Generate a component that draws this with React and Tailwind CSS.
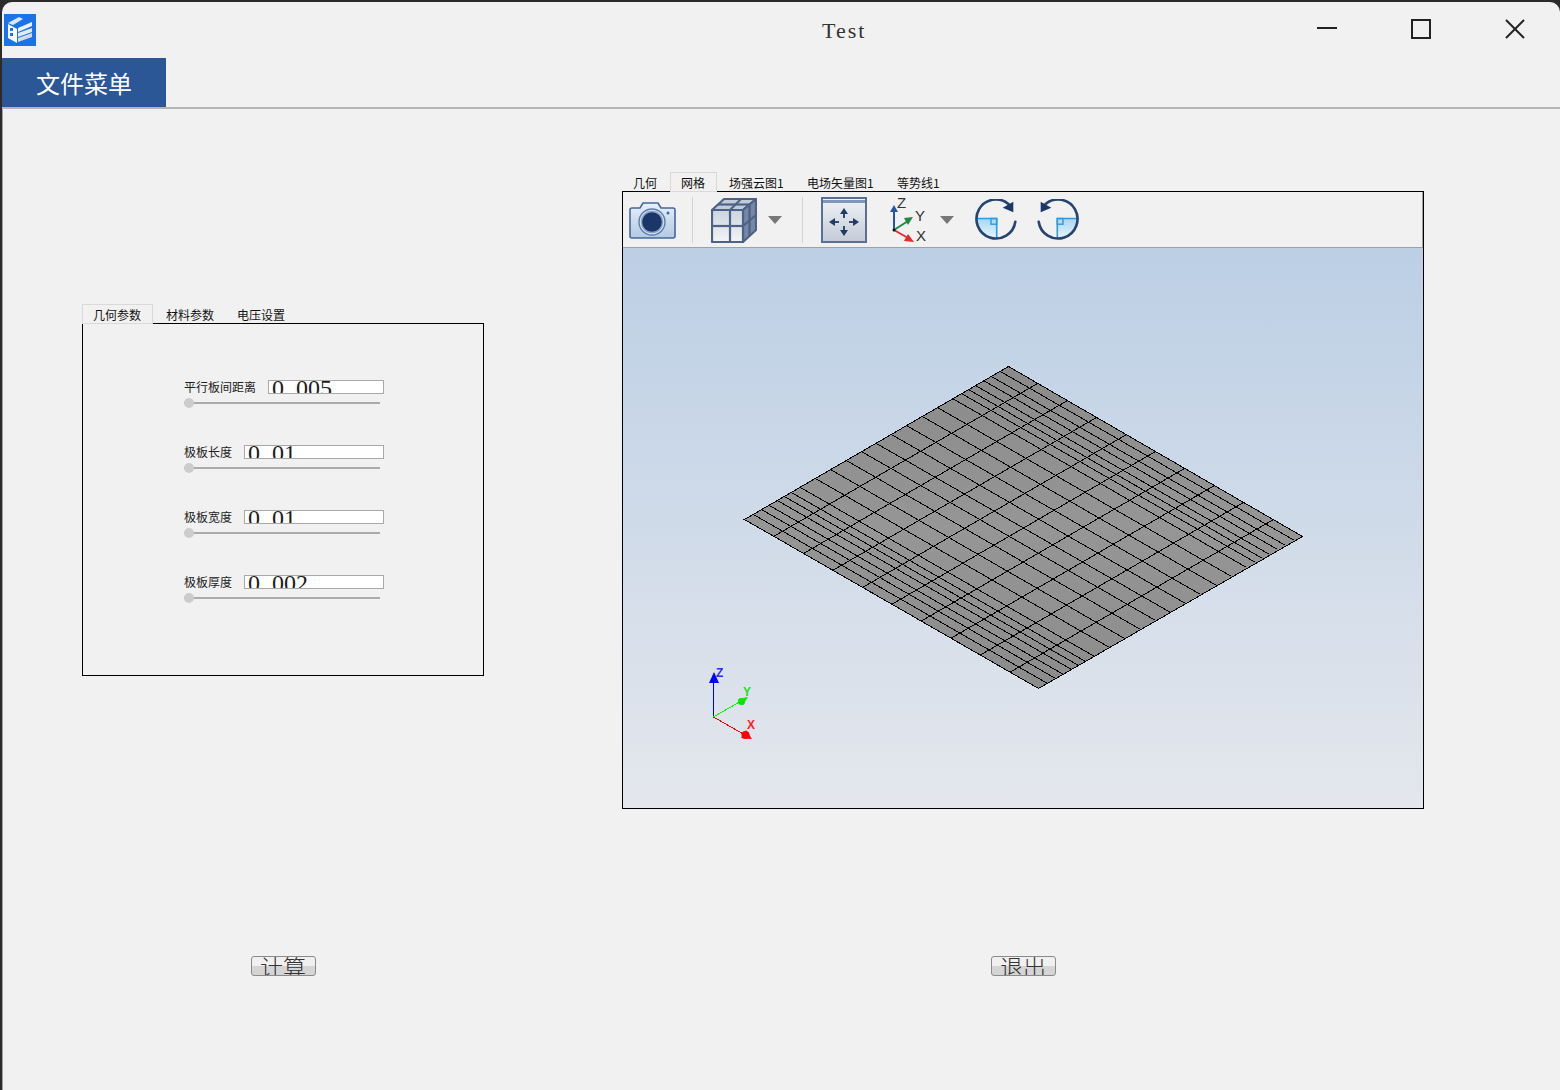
const cjk = { fontFamily: '"Noto Sans CJK SC", sans-serif' };

const leftTabs = [
  { label: "几何参数", active: true },
  { label: "材料参数" },
  { label: "电压设置" },
];

const viewTabs = [
  { label: "几何", width: "w-[48px] pl-[11px]" },
  { label: "网格", width: "w-[47px] pl-[10px]", active: true },
  { label: "场强云图1", width: "w-[78px] pl-[12px]" },
  { label: "电场矢量图1", width: "w-[90px] pl-[12px]" },
  { label: "等势线1", width: "w-[70px] pl-[12px]" },
];

const params = [
  { label: "平行板间距离", value: "0.005" },
  { label: "极板长度", value: "0.01" },
  { label: "极板宽度", value: "0.01" },
  { label: "极板厚度", value: "0.002" },
];

// mesh corners, in page pixels
const T = [1008.5, 366.5];
const L = [744.5, 519.5];
const B = [1038.5, 688.5];
const R = [1302.5, 536.5];
const outline = [T, R, B, L].map((p) => p.join(",")).join(" ");

const lerp = (a, b, f) => [Math.round(a[0] + (b[0] - a[0]) * f - 0.5) + 0.5, Math.round(a[1] + (b[1] - a[1]) * f - 0.5) + 0.5];

// spacing along the short edges: tight at both ends, even in the middle
const dense = [8.5, 17, 25, 33, 40, 47, 56];
const edgeOffsets = [
  ...dense,
  ...Array.from({ length: 9 }, (_, i) => 56 + (i + 1) * 15.2),
  ...dense.slice().reverse().map((d) => 264 - d),
];

function Mesh() {
  const lines = [];
  // every line of a family gets the same vector, so their pixel steps line up
  edgeOffsets.forEach((o) => {
    const s = lerp(L, T, o / 264);
    lines.push([s, [s[0] + 294, s[1] + 169]]);
  });
  for (let i = 1; i < 10; i++) {
    const s = lerp(T, R, i / 10);
    lines.push([s, [s[0] - 264, s[1] + 153]]);
  }
  return (
    <g shapeRendering="crispEdges">
      <clipPath id="meshClip">
        <polygon points={outline} />
      </clipPath>
      <polygon points={outline} fill="url(#meshFill)" />
      <g clipPath="url(#meshClip)">
        {lines.map((l, i) => (
          <line key={i} x1={l[0][0]} y1={l[0][1]} x2={l[1][0]} y2={l[1][1]} stroke="#000" strokeWidth="1" />
        ))}
      </g>
      <polygon points={outline} fill="none" stroke="#000" />
    </g>
  );
}

function Triad() {
  return (
    <g fontFamily="Liberation Sans, sans-serif" fontWeight="700" fontSize="12">
      <g shapeRendering="crispEdges">
        <line x1="713.5" y1="717" x2="713.5" y2="682" stroke="#0000ff" />
        <line x1="713.5" y1="717" x2="741" y2="701" stroke="#00ff00" />
        <line x1="713.5" y1="717" x2="745" y2="735" stroke="#ff0000" />
      </g>
      <polygon points="714,672 709,683 719,683" fill="#0000ff" />
      <polygon points="748,697 738,699 743,705" fill="#00e800" />
      <circle cx="741.5" cy="701.5" r="3.5" fill="#00e800" />
      <polygon points="752,739 741,738 746,730" fill="#ff0000" />
      <circle cx="745.5" cy="735" r="4" fill="#ff0000" />
      <text x="716" y="677" fill="#2a2aff">Z</text>
      <text x="743" y="696" fill="#22e022">Y</text>
      <text x="747" y="729" fill="#ff2020">X</text>
    </g>
  );
}

function AppIcon() {
  return (
    <svg width="32" height="32" viewBox="0 0 32 32">
      <rect width="32" height="32" fill="#1a73e8" />
      <polygon points="4,9 15,3 19,5 9,11" fill="#dfe6ef" />
      <polygon points="4,10 13,15 13,29 4,24" fill="#fff" />
      <rect x="6" y="14" width="3" height="3" fill="#1a73e8" />
      <rect x="6" y="19" width="3" height="3" fill="#1a73e8" />
      <polygon points="14,14 28,8 28,12 14,18" fill="#eef3f9" />
      <polygon points="14,19 28,14 28,18 14,23" fill="#e3e9f1" />
      <polygon points="14,24 28,19 28,23 14,28" fill="#d3dbe6" />
    </svg>
  );
}

function CameraIcon() {
  return (
    <svg width="47" height="38" viewBox="0 0 47 38" className="ml-[6px]">
      <defs>
        <linearGradient id="camBody" x1="0" y1="0" x2="0" y2="1">
          <stop offset="0" stopColor="#e6f0fa" />
          <stop offset="1" stopColor="#b4c9e2" />
        </linearGradient>
      </defs>
      <path
        d="M3 7h8l3-5h15l3 5h12a2 2 0 0 1 2 2v26a2 2 0 0 1-2 2H3a2 2 0 0 1-2-2V9a2 2 0 0 1 2-2z"
        fill="url(#camBody)"
        stroke="#46689a"
        strokeWidth="1.6"
      />
      <circle cx="23" cy="21" r="13" fill="#d7e4f2" stroke="#5d7fae" strokeWidth="1.4" />
      <circle cx="23" cy="21" r="10.5" fill="#1b3668" stroke="#8aa3c5" strokeWidth="1.4" />
      <circle cx="23" cy="21" r="8" fill="#1b3668" />
      <circle cx="39" cy="12" r="1.5" fill="#46689a" />
    </svg>
  );
}

function CubeIcon() {
  return (
    <svg width="46" height="46" viewBox="0 0 46 46" className="ml-[18px]">
      <defs>
        <linearGradient id="cubeFront" x1="0" y1="0" x2="0" y2="1">
          <stop offset="0" stopColor="#ccd4df" />
          <stop offset="1" stopColor="#f3f4f6" />
        </linearGradient>
      </defs>
      <g stroke="#4d6285" strokeWidth="2.2" strokeLinejoin="round">
        <polygon points="1,13 13,2 45,2 32,13" fill="#c2cbd8" />
        <polygon points="32,13 45,2 45,33 32,45" fill="#7688a5" />
        <polygon points="1,13 32,13 32,45 1,45" fill="url(#cubeFront)" />
        <line x1="19" y1="13" x2="19" y2="45" />
        <line x1="1" y1="29" x2="32" y2="29" />
        <line x1="19" y1="13" x2="30" y2="2" />
        <line x1="7" y1="7.5" x2="39" y2="7.5" />
        <line x1="32" y1="29" x2="45" y2="18" />
        <line x1="38.5" y1="7.5" x2="38.5" y2="39" />
      </g>
    </svg>
  );
}

function DropArrow({ className }) {
  return (
    <svg width="14" height="8" viewBox="0 0 14 8" className={className}>
      <polygon points="0,0 14,0 7,8" fill="#777" />
    </svg>
  );
}

function FitIcon() {
  return (
    <svg width="46" height="46" viewBox="0 0 46 46" className="ml-[18px]">
      <defs>
        <linearGradient id="fitBody" x1="0" y1="0" x2="0" y2="1">
          <stop offset="0" stopColor="#f0f2f6" />
          <stop offset="1" stopColor="#c3cbd8" />
        </linearGradient>
      </defs>
      <rect x="1" y="1" width="44" height="44" fill="url(#fitBody)" stroke="#5b6f90" strokeWidth="2" />
      <rect x="2" y="3" width="42" height="3" fill="#7f97bb" />
      <g stroke="#1f3a63" strokeWidth="1.8" fill="#1f3a63">
        <line x1="23" y1="16" x2="23" y2="21" />
        <line x1="23" y1="29" x2="23" y2="34" />
        <line x1="12" y1="25" x2="18" y2="25" />
        <line x1="28" y1="25" x2="34" y2="25" />
      </g>
      <g fill="#1f3a63">
        <polygon points="23,11 19,17 27,17" />
        <polygon points="23,39 19,33 27,33" />
        <polygon points="8,25 14,21 14,29" />
        <polygon points="38,25 32,21 32,29" />
      </g>
    </svg>
  );
}

function AxesIcon() {
  return (
    <svg width="38" height="46" viewBox="0 0 38 46" className="ml-[22px]" fontFamily="Liberation Sans, sans-serif" fontSize="15" fill="#333">
      <line x1="5" y1="33" x2="5" y2="14" stroke="#2456a8" strokeWidth="2" />
      <polygon points="5,8 1,15 9,15" fill="#2456a8" />
      <line x1="5" y1="33" x2="19" y2="24" stroke="#1f8a3c" strokeWidth="2" />
      <polygon points="24,20 15,21 19,28" fill="#1f8a3c" />
      <line x1="5" y1="33" x2="19" y2="41" stroke="#e02c2c" strokeWidth="2" />
      <polygon points="25,45 15,44 19,37" fill="#e02c2c" />
      <circle cx="5" cy="33" r="1.5" fill="#111" />
      <text x="8" y="11">Z</text>
      <text x="26" y="24">Y</text>
      <text x="27" y="44">X</text>
    </svg>
  );
}

function RotateIcon({ mirrored, className }) {
  return (
    <svg width="42" height="42" viewBox="0 0 42 42" className={`${className} ${mirrored ? "-scale-x-100" : ""}`}>
      <defs>
        <linearGradient id="quarter" x1="0" y1="0" x2="0" y2="1">
          <stop offset="0" stopColor="#a6d7f2" />
          <stop offset="1" stopColor="#e8f5fc" />
        </linearGradient>
      </defs>
      <path d="M1.5 19.5A19.5 19.5 0 0 0 21.7 39.5V19.5z" fill="url(#quarter)" />
      <path d="M1.5 19.5H21.7V39" fill="none" stroke="#2c9be0" strokeWidth="1.6" />
      <rect x="16" y="19.5" width="5.7" height="5.7" fill="none" stroke="#2c9be0" strokeWidth="1.4" />
      <path d="M40.3 22.7A19.5 19.5 0 1 1 33.5 5" fill="none" stroke="#27446f" strokeWidth="2.6" strokeLinecap="round" />
      <polygon points="27.7,8.7 38.3,2.7 38.3,13.3" fill="#1b3668" />
    </svg>
  );
}

function WindowControls() {
  return (
    <div className="ml-[449px] flex items-center">
      <svg width="20" height="20" viewBox="0 0 20 20" stroke="#222" strokeWidth="2" className="-mt-[2px]">
        <line x1="0" y1="9" x2="20" y2="9" />
      </svg>
      <svg width="20" height="20" viewBox="0 0 20 20" fill="none" stroke="#222" strokeWidth="2" className="ml-[74px] -mt-[2px]">
        <rect x="1" y="1" width="18" height="18" />
      </svg>
      <svg width="20" height="20" viewBox="0 0 20 20" stroke="#222" strokeWidth="2" className="ml-[74px] -mt-[2px]">
        <line x1="1" y1="1" x2="19" y2="19" />
        <line x1="19" y1="1" x2="1" y2="19" />
      </svg>
    </div>
  );
}

function ParamRow({ label, value }) {
  const [whole, frac] = value.split(".");
  return (
    <div className="w-[200px]">
      <div className="flex items-center gap-3">
        <span className="whitespace-nowrap text-xs leading-[14px] text-[#222]">{label}</span>
        <div className="h-[14px] flex-1 overflow-hidden border border-[#a9a9a9] bg-white pl-[3px]">
          <div className="-mt-[5px] text-[24px] leading-[24px] text-[#1c1c1c]" style={{ fontFamily: '"Liberation Serif", serif' }}>
            {whole}
            <span className="tracking-[6px]">.</span>
            {frac}
          </div>
        </div>
      </div>
      <div className="relative mt-[4px] flex h-[10px] w-[196px] items-center">
        <div className="h-[2px] w-full bg-[#ababab]" />
        <div className="absolute left-0 top-0 h-[10px] w-[10px] rounded-full bg-[#cccccc]" />
      </div>
    </div>
  );
}

function PushButton({ children }) {
  return (
    <button className="h-[20px] w-[65px] overflow-hidden rounded-[3px] border border-[#8a8a8a] bg-[linear-gradient(#f0f0f0_0%,#f0f0f0_50%,#d5d5d5_50%,#d5d5d5_100%)] text-[23px] font-light leading-[18px] text-[#333]">
      {children}
    </button>
  );
}

export default function App() {
  return (
    <div className="h-[1090px] w-[1560px] overflow-hidden bg-[#2b2b2b] pl-[2px] pt-[2px] text-xs" style={cjk}>
      <div className="flex h-full flex-col rounded-t-[10px] bg-[#f1f1f1]">
        {/* title bar */}
        <div className="flex h-[56px] items-center pl-[2px]">
          <AppIcon />
          <div className="ml-[786px] w-[46px] whitespace-nowrap pt-[2px] text-[22px] tracking-[2px] text-[#333]" style={{ fontFamily: '"Liberation Serif", serif' }}>
            Test
          </div>
          <WindowControls />
        </div>

        {/* menu */}
        <div className="h-[51px] border-b-2 border-[#b5b5b5]">
          <div className="flex h-[49px] w-[164px] items-center justify-center bg-[#2b5797] text-2xl text-white">文件菜单</div>
        </div>

        {/* content */}
        <div className="flex flex-1 items-start border-l border-[#a3a3a3] pl-[79px]">
          <div className="flex w-[402px] flex-col items-center pt-[195px]">
            <div className="w-full">
              <div className="flex h-[19px] text-[#111]">
                {leftTabs.map((t) => (
                  <div
                    key={t.label}
                    className={
                      t.active
                        ? "relative z-10 -mb-px h-[20px] w-[71px] border border-[#d9d9d9] bg-[#f1f1f1] pl-[10px] leading-[19px]"
                        : "w-[71px] pl-[13px] pt-px leading-[19px]"
                    }
                  >
                    {t.label}
                  </div>
                ))}
              </div>
              <div className="flex h-[353px] flex-col gap-[37px] border border-black pl-[101px] pt-[56px]">
                {params.map((p) => (
                  <ParamRow key={p.label} label={p.label} value={p.value} />
                ))}
              </div>
            </div>
            <div className="mt-[280px]">
              <PushButton>计算</PushButton>
            </div>
          </div>

          <div className="ml-[138px] flex w-[802px] flex-col items-center pt-[63px]">
            <div className="w-full">
              <div className="flex h-[19px] text-[#111]">
                {viewTabs.map((t) => (
                  <div
                    key={t.label}
                    className={
                      t.active
                        ? `relative z-10 -mb-px h-[20px] border border-[#d9d9d9] bg-[#f1f1f1] leading-[19px] ${t.width}`
                        : `whitespace-nowrap pt-px leading-[19px] ${t.width}`
                    }
                  >
                    {t.label}
                  </div>
                ))}
              </div>
              <div className="flex h-[618px] flex-col border border-black">
                <div className="flex h-[56px] items-center border-b border-r border-[#a0a0a0]">
                  <CameraIcon />
                  <div className="ml-[16px] h-[46px] w-px bg-[#d4d4d4]" />
                  <CubeIcon />
                  <DropArrow className="ml-[11px]" />
                  <div className="ml-[20px] h-[46px] w-px bg-[#d4d4d4]" />
                  <FitIcon />
                  <AxesIcon />
                  <DropArrow className="ml-[13px]" />
                  <RotateIcon className="ml-[21px]" />
                  <RotateIcon mirrored className="ml-[20px]" />
                </div>
                <div className="flex-1 bg-gradient-to-b from-[#bccfe5] to-[#e4e7ed]">
                  <svg viewBox="623 248 800 560" className="block h-full w-full">
                    <defs>
                      <linearGradient id="meshFill" gradientUnits="userSpaceOnUse" x1="0" y1="366" x2="0" y2="688">
                        <stop offset="0" stopColor="#8a8a8a" />
                        <stop offset="0.5" stopColor="#969696" />
                        <stop offset="1" stopColor="#8c8c8c" />
                      </linearGradient>
                    </defs>
                    <Mesh />
                    <Triad />
                  </svg>
                </div>
              </div>
            </div>
            <div className="mt-[147px]">
              <PushButton>退出</PushButton>
            </div>
          </div>
        </div>
      </div>
    </div>
  );
}
